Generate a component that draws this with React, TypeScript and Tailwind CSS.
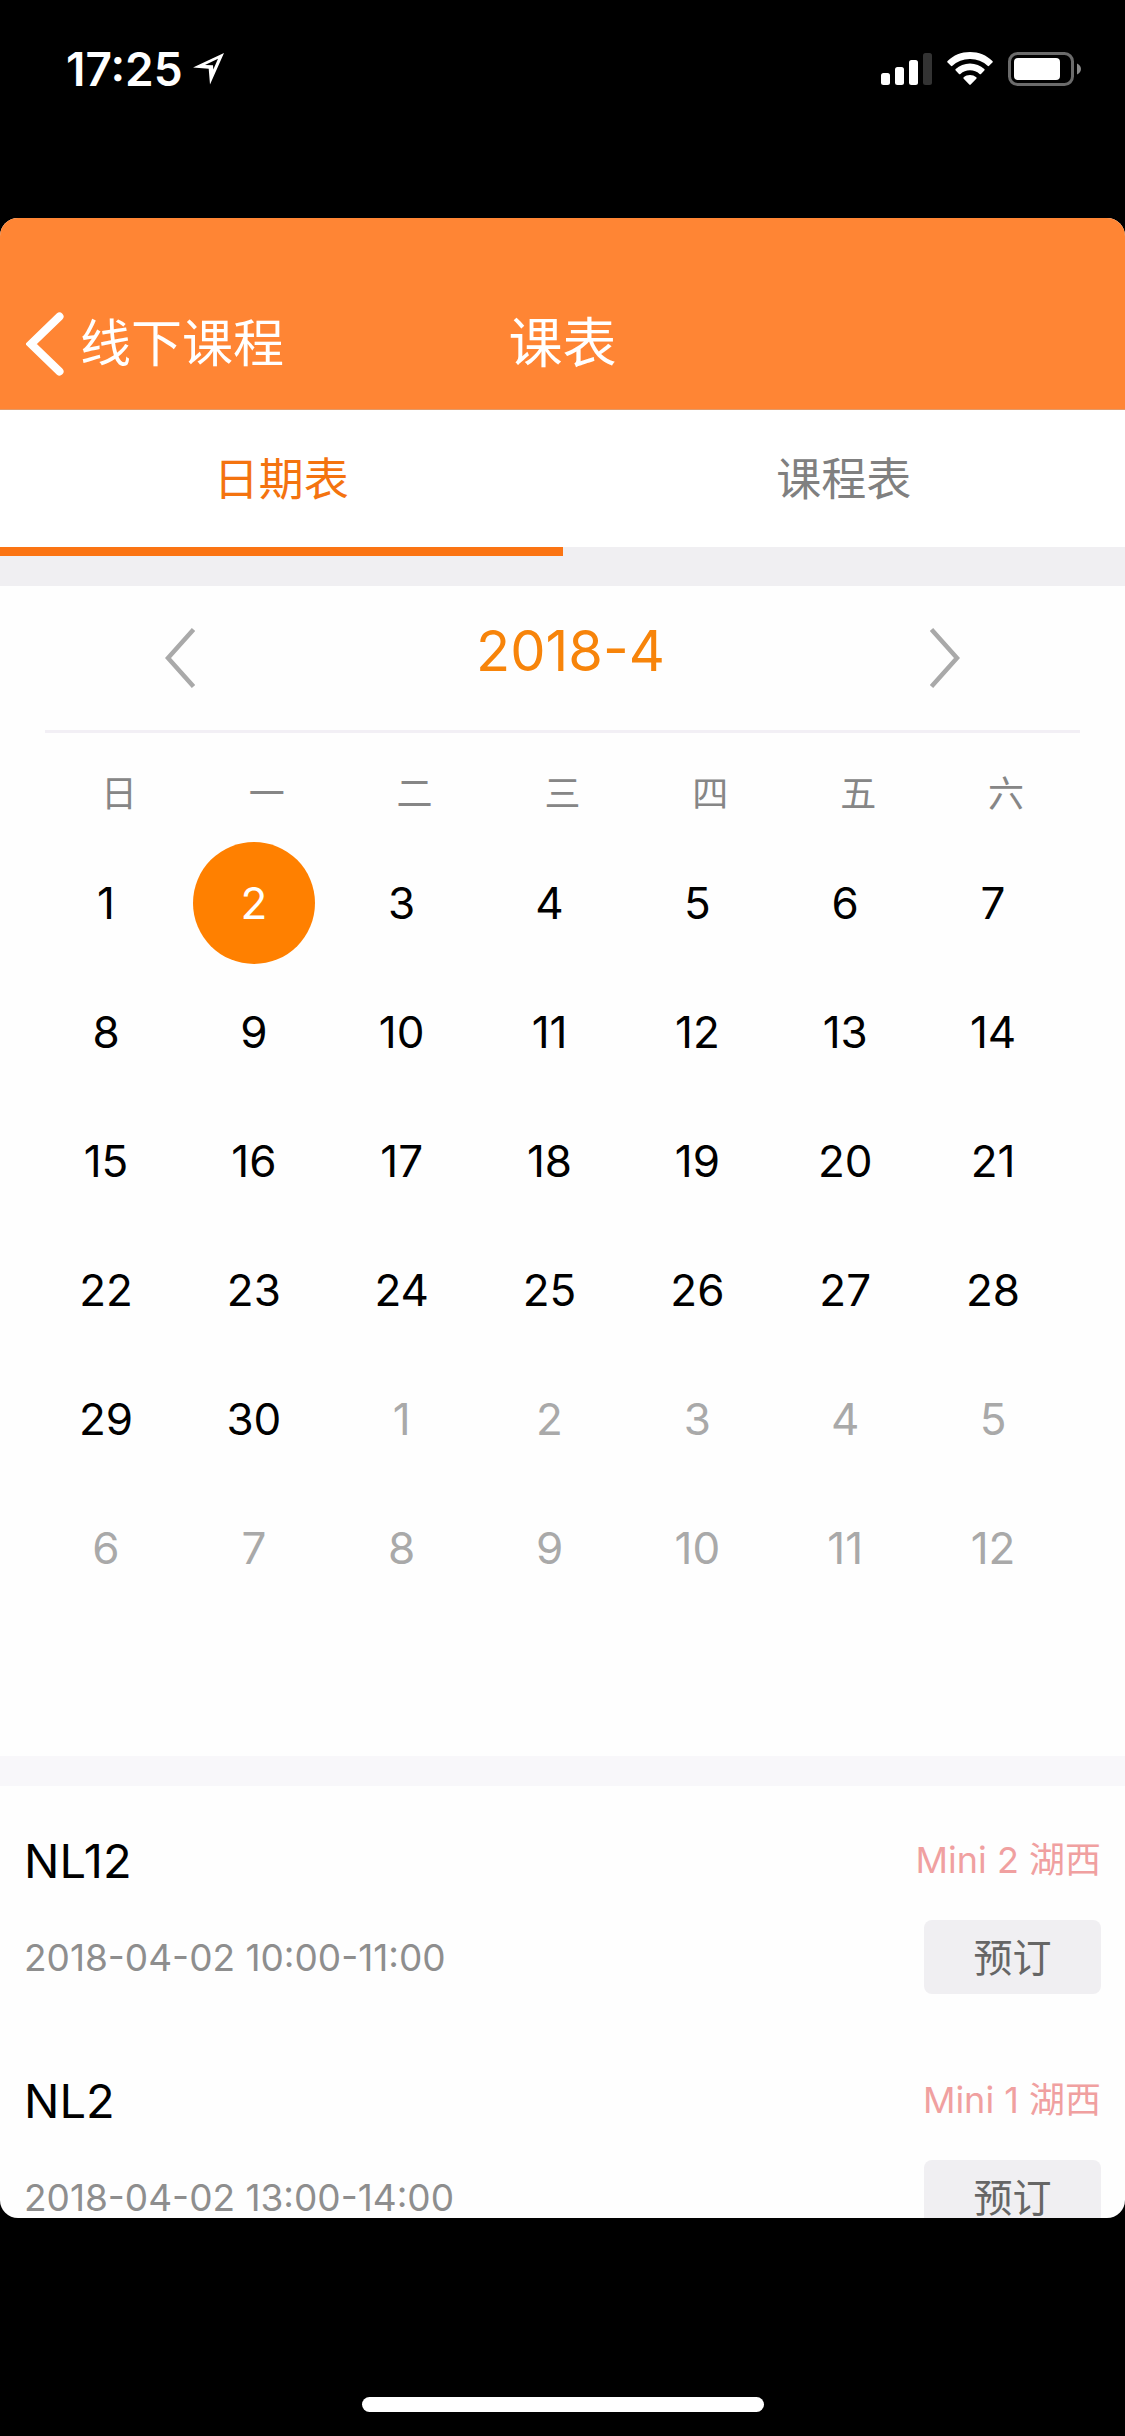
import React, { useState } from 'react';

interface Day {
  date: number;
  outside: boolean;
}

interface Lesson {
  name: string;
  place: string;
  time: string;
}

const weekdays = ['日', '一', '二', '三', '四', '五', '六'];

const tabs = ['日期表', '课程表'];

const lessons: Lesson[] = [
  { name: 'NL12', place: 'Mini 2 湖西', time: '2018-04-02 10:00-11:00' },
  { name: 'NL2', place: 'Mini 1 湖西', time: '2018-04-02 13:00-14:00' },
];

// April 2018 starts on a Sunday, the rest of the grid runs into May
const weeks: Day[][] = Array.from({ length: 6 }, (_, week) =>
  Array.from({ length: 7 }, (_, i) => {
    const n = week * 7 + i + 1;
    return n > 30 ? { date: n - 30, outside: true } : { date: n, outside: false };
  })
);

const StatusBar: React.FC = () => (
  <div className="flex h-[218px] shrink-0 items-start justify-between pt-[42px] pr-11 pl-[66px] text-white">
    <div className="flex h-[54px] items-center gap-2.5">
      <span className="text-[46px] leading-[54px] font-semibold">17:25</span>
      <svg className="h-8 w-8" viewBox="0 0 32 32" fill="currentColor">
        <path fillRule="evenodd" d="M0 14.500 31 0 17 31.500 15.700 15.700zM12 12l8 .2.300 4.300L25 5.800z" />
      </svg>
    </div>
    <div className="flex h-[54px] items-center gap-[15px]">
      <svg className="h-[34px] w-[51px]" viewBox="0 0 51 34" fill="currentColor">
        <rect x="0" y="21" width="9" height="12" rx="2.5" />
        <rect x="14" y="15" width="9" height="18" rx="2.5" />
        <rect x="28" y="8" width="9" height="25" rx="2.5" />
        <rect x="42" y="1" width="9" height="32" rx="2.5" fill="#333333" />
      </svg>
      <svg className="h-[34px] w-[46px]" viewBox="0 0 46 34" fill="currentColor">
        <path d="M23 0C14.300 0 6.400 3.300.6 8.900a1 1 0 0 0 0 1.500l3.300 3.400a1 1 0 0 0 1.500 0A25.500 25.500 0 0 1 23 7a25.500 25.500 0 0 1 17.600 6.800 1 1 0 0 0 1.500 0l3.300-3.400a1 1 0 0 0 0-1.500C39.600 3.300 31.700 0 23 0z" />
        <path d="M23 11.500c-5.500 0-10.500 2.100-14.300 5.500a1 1 0 0 0 0 1.500l3.300 3.400a1 1 0 0 0 1.400 0A14.300 14.300 0 0 1 23 18.300c3.700 0 7 1.400 9.600 3.600a1 1 0 0 0 1.400 0l3.300-3.400a1 1 0 0 0 0-1.500C33.500 13.600 28.500 11.500 23 11.500z" />
        <path d="M23 23c-2.400 0-4.600.8-6.300 2.200a1 1 0 0 0 0 1.500l5.600 5.900a1 1 0 0 0 1.400 0l5.600-5.900a1 1 0 0 0 0-1.500A10 10 0 0 0 23 23z" />
      </svg>
      <svg className="h-[34px] w-[73px]" viewBox="0 0 73 34">
        <rect x="1.500" y="1.500" width="63" height="31" rx="8" fill="none" stroke="#6b6b6b" strokeWidth="3" />
        <rect x="6" y="6" width="46" height="22" rx="4" fill="currentColor" />
        <path d="M69 11.500c2.400.9 4 3 4 5.500s-1.600 4.600-4 5.500z" fill="#8a8a8a" />
      </svg>
    </div>
  </div>
);

const Header: React.FC = () => (
  <header className="grid h-48 grid-cols-[1fr_auto_1fr] items-center border-b border-[#e39a68] bg-[#ff8534] pt-[60px] text-white">
    <a href="#" className="flex items-center gap-4 pl-[26px] text-[51px] leading-none">
      <svg className="h-16 w-[38px]" viewBox="0 0 38 64" fill="none" stroke="currentColor">
        <path d="M33.500 4.500 5 32l28.500 27.500" strokeWidth="8" strokeLinecap="round" strokeLinejoin="miter" />
      </svg>
      线下课程
    </a>
    <h1 className="text-[54px] leading-none">课表</h1>
  </header>
);

const Calendar: React.FC = () => {
  const [selected, setSelected] = useState(2);

  return (
    <section className="px-[45px] pb-36">
      <div className="flex h-[147px] items-center justify-between border-b-[3px] border-[#f2eff5] px-[120px]">
        <button type="button" aria-label="上个月" className="text-[#a9a9a9]">
          <svg className="h-[60px] w-[30px]" viewBox="0 0 30 60" fill="none" stroke="currentColor">
            <path d="M28.500 1.500 3 30l25.500 28.500" strokeWidth="4.500" />
          </svg>
        </button>
        <h2 className="pb-3.5 pl-4 text-[56px] leading-none text-[#f7840a]">2018-4</h2>
        <button type="button" aria-label="下个月" className="text-[#a9a9a9]">
          <svg className="h-[60px] w-[30px]" viewBox="0 0 30 60" fill="none" stroke="currentColor">
            <path d="M1.500 1.500 27 30 1.500 58.500" strokeWidth="4.500" />
          </svg>
        </button>
      </div>
      <table className="w-full table-fixed">
        <thead>
          <tr className="h-[105px]">
            {weekdays.map((day) => (
              <th key={day} className="pt-4 text-[36px] leading-none font-normal text-[#868686]">
                {day}
              </th>
            ))}
          </tr>
        </thead>
        <tbody>
          {weeks.map((week, index) => (
            <tr key={index} className="h-[129px]">
              {week.map((day) => {
                const active = !day.outside && day.date === selected;
                return (
                  <td key={day.date} className="p-0">
                    <button
                      type="button"
                      onClick={() => !day.outside && setSelected(day.date)}
                      className={`flex size-[122px] items-center justify-center rounded-full text-[44px] leading-none ${
                        active ? 'bg-[#ff8000] text-white' : day.outside ? 'text-[#a9a9a9]' : 'text-black'
                      }`}
                    >
                      {day.date}
                    </button>
                  </td>
                );
              })}
            </tr>
          ))}
        </tbody>
      </table>
    </section>
  );
};

const App: React.FC = () => {
  const [tab, setTab] = useState(0);

  return (
    <div className="flex h-screen flex-col bg-black font-['Inter','Noto_Sans_CJK_SC',sans-serif]">
      <StatusBar />
      <main className="min-h-0 flex-1 overflow-hidden rounded-[18px] bg-[#fefefe]">
        <Header />
        <nav className="flex bg-white">
          {tabs.map((label, index) => (
            <button
              key={label}
              type="button"
              onClick={() => setTab(index)}
              className={`h-[146px] flex-1 border-b-[9px] pt-0.5 text-[45px] leading-none ${
                tab === index ? 'border-[#fb7413] text-[#f4730f]' : 'border-[#f0eff2] text-[#808080]'
              }`}
            >
              {label}
            </button>
          ))}
        </nav>
        <div className="h-[30px] bg-[#f0eff2]" />
        <Calendar />
        <div className="h-[30px] bg-[#f8f7fa]" />
        <ul>
          {lessons.map((lesson) => (
            <li key={lesson.name} className="flex h-60 flex-col gap-9 px-6 pt-[50px]">
              <div className="flex h-12 items-center justify-between">
                <h3 className="text-[47px] leading-none text-black">{lesson.name}</h3>
                <span className="text-[36px] leading-none text-[#f0a0a0]">{lesson.place}</span>
              </div>
              <div className="flex items-center justify-between">
                <time className="text-[37px] leading-none text-[#8e8e8e]">{lesson.time}</time>
                <button
                  type="button"
                  className="h-[74px] w-[177px] rounded-lg bg-[#f0eff2] text-[39px] leading-none text-[#666666]"
                >
                  预订
                </button>
              </div>
            </li>
          ))}
        </ul>
      </main>
      <div className="flex h-[218px] shrink-0 items-end justify-center pb-6">
        <div className="h-[15px] w-[402px] rounded-full bg-white" />
      </div>
    </div>
  );
};

export default App;
